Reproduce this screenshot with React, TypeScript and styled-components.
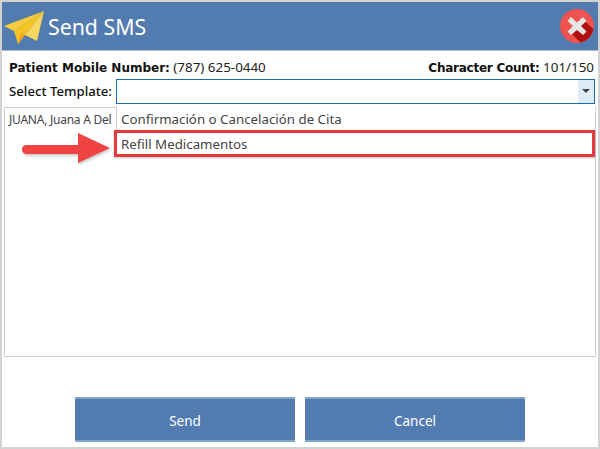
import { createGlobalStyle, styled } from "styled-components";

const GlobalStyle = createGlobalStyle`
  html, body {
    margin: 0;
    padding: 0;
    background: #fff;
  }
  body {
    font-family: "Noto Sans", "Open Sans", sans-serif;
    color: #222;
  }
`;

const Window = styled.div`
  position: relative;
  box-sizing: border-box;
  width: 600px;
  height: 449px;
  display: flex;
  flex-direction: column;
  background: #fff;
  border: 2px solid #d2d2d2;
`;

const TitleBar = styled.header`
  height: 49px;
  flex: none;
  display: flex;
  align-items: center;
  padding: 0 3px 0 2px;
  background: #527bb0;
  border-bottom: 1px solid #a9bdd6;
  box-sizing: border-box;
`;

const Title = styled.h1`
  margin: 1px 0 0 2px;
  font-size: 21.3px;
  font-weight: 400;
  color: #fff;
  flex: 1;
`;

const Content = styled.div`
  flex: 1;
  display: flex;
  flex-direction: column;
  padding: 5px 2px 0 2px;
`;

const InfoRow = styled.div`
  display: flex;
  justify-content: space-between;
  align-items: center;
  height: 21px;
  padding: 0 2px 0 5px;
  font-size: 13.4px;
  white-space: nowrap;
`;

const Label = styled.span<{ $tight?: boolean }>`
  font-family: "DejaVu Sans", sans-serif;
  font-weight: 700;
  font-size: 12px;
  letter-spacing: ${({ $tight }) => ($tight ? "-0.25px" : "0")};
  color: #111;
`;

const TemplateRow = styled.div`
  display: flex;
  align-items: center;
  height: 26px;
  margin-top: 1px;
`;

const TemplateLabel = styled.label`
  width: 112px;
  padding-left: 5px;
  font-size: 13.2px;
  font-weight: 500;
  color: #111;
  box-sizing: border-box;
  white-space: nowrap;
`;

const Select = styled.div`
  flex: 1;
  height: 25px;
  margin-right: 1px;
  box-sizing: border-box;
  border: 1px solid #1a6db5;
  display: flex;
  justify-content: flex-end;
`;

const Caret = styled.div`
  width: 16px;
  display: flex;
  align-items: center;
  justify-content: center;
  background: #dfebf7;

  &::after {
    content: "";
    border-left: 4px solid transparent;
    border-right: 4px solid transparent;
    border-top: 4px solid #444;
  }
`;

const MessageBox = styled.div`
  height: 250px;
  margin-top: 3px;
  box-sizing: border-box;
  border: 1px solid #cfcfcf;
  padding: 3px 4px;
  font-size: 12px;
  letter-spacing: -0.25px;
  color: #444;
`;

const Actions = styled.div`
  display: flex;
  justify-content: center;
  gap: 10px;
  margin-top: 40px;
`;

const ActionButton = styled.button`
  width: 220px;
  height: 45px;
  padding: 2px 0 0;
  border: 0;
  border-top: 2px solid #83a3c9;
  border-bottom: 2px solid #83a3c9;
  background: #527bb0;
  color: #fff;
  font-family: "Noto Sans", sans-serif;
  font-size: 13.5px;
`;

const Dropdown = styled.ul`
  position: absolute;
  left: 114px;
  top: 104px;
  width: 480px;
  box-sizing: border-box;
  margin: 0;
  padding: 1px 0 0;
  list-style: none;
  background: #fff;
  border-left: 1px solid #d0d0d0;
  border-right: 1px solid #d0d0d0;
  font-size: 13.3px;
  color: #444;
`;

const Option = styled.li<{ $marked?: boolean }>`
  position: relative;
  height: 25px;
  line-height: 25px;
  padding-left: 4px;
  box-sizing: border-box;
  white-space: nowrap;

  ${({ $marked }) =>
    $marked &&
    `&::after {
      content: "";
      position: absolute;
      left: -3px;
      right: 0;
      top: -2px;
      bottom: 0;
      border: 3px solid #e0393e;
      box-shadow: 0 1px 2px rgba(0, 0, 0, 0.25);
    }`}
`;

const Arrow = styled.svg`
  position: absolute;
  left: 18px;
  top: 131px;
  filter: drop-shadow(1px 2px 1px rgba(0, 0, 0, 0.2));
`;

const PlaneIcon = () => (
  <svg width="42" height="40" viewBox="0 0 42 40">
    <polygon points="0,20 40,5 10,25" fill="#f8cc3d" />
    <polygon points="40,5 10,25 14,38 21,29" fill="#f5c526" />
    <polygon points="40,5 21,29 33,35" fill="#f7d75e" />
    <polygon points="14,38 21,29 17,27" fill="#ef9f2a" />
  </svg>
);

const CloseIcon = () => (
  <svg width="36" height="36" viewBox="0 0 36 36">
    <circle cx="18" cy="18" r="17" fill="#ef5350" />
    <path d="M12 25 L25 12 L34.5 21.5 A17 17 0 0 1 21.5 34.5 Z" fill="#b01010" />
    <path
      d="M12 9 L18 14.5 L24 9 L27.5 13 L22 18 L27.5 23.5 L24 27 L18 22 L12 27 L8.5 23.5 L14 18 L8.5 13 Z"
      fill="#e6e6e6"
    />
  </svg>
);

export default function App() {
  return (
    <>
      <GlobalStyle />
      <Window>
        <TitleBar>
          <PlaneIcon />
          <Title>Send SMS</Title>
          <CloseIcon />
        </TitleBar>
        <Content>
          <InfoRow>
            <span>
              <Label>Patient Mobile Number:</Label> (787) 625-0440
            </span>
            <span>
              <Label $tight>Character Count:</Label> 101/150
            </span>
          </InfoRow>
          <TemplateRow>
            <TemplateLabel>Select Template:</TemplateLabel>
            <Select>
              <Caret />
            </Select>
          </TemplateRow>
          <MessageBox>JUANA, Juana A Del</MessageBox>
          <Actions>
            <ActionButton>Send</ActionButton>
            <ActionButton>Cancel</ActionButton>
          </Actions>
        </Content>
        <Dropdown>
          <Option>Confirmación o Cancelación de Cita</Option>
          <Option $marked>Refill Medicamentos</Option>
        </Dropdown>
        <Arrow width="92" height="36" viewBox="0 0 92 36">
          <rect x="2" y="12" width="62" height="9" rx="4.5" fill="#f04444" />
          <polygon points="58,0 90,15 58,30" fill="#f04444" />
        </Arrow>
      </Window>
    </>
  );
}
